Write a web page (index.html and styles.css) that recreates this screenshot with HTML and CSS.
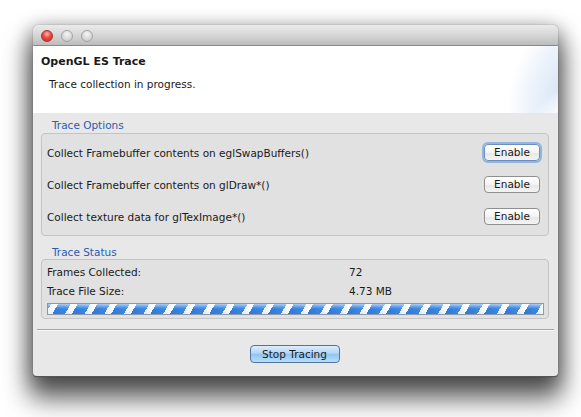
FILE: index.html
```html
<!DOCTYPE html>
<html>
<head>
<meta charset="utf-8">
<link rel="stylesheet" href="styles.css">
</head>
<body>
<div class="window">
  <div class="titlebar">
    <span class="light red"></span>
    <span class="light"></span>
    <span class="light"></span>
  </div>
  <div class="header">
    <div class="title">OpenGL ES Trace</div>
    <div class="subtitle">Trace collection in progress.</div>
  </div>
  <div class="content">
    <div class="section-label first">Trace Options</div>
    <div class="group options">
      <div class="opt-row"><span>Collect Framebuffer contents on eglSwapBuffers()</span><button class="btn focus">Enable</button></div>
      <div class="opt-row"><span>Collect Framebuffer contents on glDraw*()</span><button class="btn">Enable</button></div>
      <div class="opt-row"><span>Collect texture data for glTexImage*()</span><button class="btn">Enable</button></div>
    </div>
    <div class="section-label">Trace Status</div>
    <div class="group status">
      <div class="stat-row"><span>Frames Collected:</span><span>72</span></div>
      <div class="stat-row"><span>Trace File Size:</span><span>4.73 MB</span></div>
      <div class="progress"></div>
    </div>
    <div class="separator"></div>
    <div class="actions"><button class="btn primary">Stop Tracing</button></div>
  </div>
</div>
</body>
</html>
```
FILE: styles.css
```css
html {
  margin: 0;
  height: 417px;
  background: #ffffff;
}
body {
  margin: 0;
  height: 417px;
  box-sizing: border-box;
  padding: 25px 0 0 33px;
  font-family: "DejaVu Sans", "Liberation Sans", sans-serif;
  font-size: 10.5px;
  color: #1a1a1a;
  overflow: hidden;
}
.window {
  width: 525px;
  height: 352px;
  display: flex;
  flex-direction: column;
  background: #e8e8e8;
  border-radius: 5px 5px 4px 4px;
  box-shadow: 0 18px 26px 4px rgba(0,0,0,0.62), 0 4px 18px 2px rgba(0,0,0,0.3), 0 0 1px rgba(0,0,0,0.6);
  border-bottom: 1px solid #555555;
  box-sizing: border-box;
  overflow: hidden;
}
.titlebar {
  height: 21px;
  flex: none;
  box-sizing: border-box;
  background: linear-gradient(#ebebeb, #d4d4d4 55%, #bcbcbc);
  border-bottom: 1px solid #8a8a8a;
  display: flex;
  align-items: center;
  gap: 8px;
  padding: 1px 0 0 8px;
}
.light {
  width: 12px;
  height: 12px;
  border-radius: 50%;
  box-sizing: border-box;
  border: 1px solid #a3a3a3;
  background: radial-gradient(circle at 50% 30%, #f6f6f6 0, #dedede 45%, #c6c6c6 100%);
}
.light.red {
  border-color: #a8322f;
  background: radial-gradient(circle at 50% 30%, #ffb4ac 0, #ea4b45 45%, #c9221c 100%);
}
.header {
  height: 67px;
  flex: none;
  box-sizing: border-box;
  padding: 8px 0 0 8px;
  background:
    radial-gradient(ellipse 150px 80px at 118% 135%, rgba(255,255,255,0) 0, rgba(255,255,255,0) 62%, rgba(255,255,255,0.75) 72%, rgba(255,255,255,0) 86%),
    radial-gradient(ellipse 100px 110px at 108% 90%, #cfdff3 0, #d8e5f5 40%, rgba(228,237,249,0.8) 65%, rgba(255,255,255,0) 92%),
    #ffffff;
}
.title {
  font-weight: bold;
  font-size: 11px;
  line-height: 16px;
}
.subtitle {
  margin-top: 6px;
  padding-left: 8px;
  line-height: 16px;
}
.content {
  padding: 0 9px 0 8px;
  display: flex;
  flex-direction: column;
}
.section-label {
  color: #2a5cb0;
  line-height: 14px;
  padding-left: 11px;
  margin-top: 9px;
}
.section-label.first {
  margin-top: 5px;
  margin-bottom: 1px;
}
.group {
  background: #e1e1e1;
  border: 1px solid #c4c4c4;
  border-radius: 4px;
}
.options {
  padding: 3px 8px 2px 5px;
}
.opt-row {
  height: 32px;
  display: flex;
  align-items: center;
  justify-content: space-between;
}
.btn {
  font-family: "DejaVu Sans", "Liberation Sans", sans-serif;
  font-size: 10.5px;
  color: #1a1a1a;
  height: 17px;
  padding: 0;
  width: 56px;
  border: 1px solid #8f8f8f;
  border-radius: 4px;
  background: linear-gradient(#ffffff, #f3f3f3 50%, #e6e6e6 51%, #f4f4f4);
  line-height: 15px;
  margin-top: -2px;
}
.btn.focus {
  border-color: #6e8fbd;
  box-shadow: 0 0 0 2px rgba(120,164,220,0.75);
}
.status {
  padding: 3px 4px 3px 5px;
}
.stat-row {
  display: grid;
  grid-template-columns: 302px 1fr;
  line-height: 19px;
}
.progress {
  margin-top: 2px;
  height: 12px;
  box-sizing: border-box;
  border: 1px solid #8e98a8;
  background:
    linear-gradient(rgba(255,255,255,0.6), rgba(255,255,255,0.2) 30%, rgba(255,255,255,0) 50%, rgba(0,30,90,0.06) 100%),
    repeating-linear-gradient(-60deg, #ffffff 0, #eef4fb 6px, #3d8ae3 6px, #2f7ede 17px);
}
.separator {
  margin: 10px -5px 0 -4px;
  height: 1px;
  flex: none;
  background: #a6a6a6;
  border-bottom: 1px solid #f8f8f8;
}
.actions {
  display: flex;
  justify-content: center;
  padding-top: 14px;
}
.btn.primary {
  width: 90px;
  height: 18px;
  margin: 0 0 0 -1px;
  border-color: #52759e;
  background: linear-gradient(#dcedfc, #b3d7f7 45%, #92c4f0 52%, #b8defb);
  line-height: 16px;
}
```
